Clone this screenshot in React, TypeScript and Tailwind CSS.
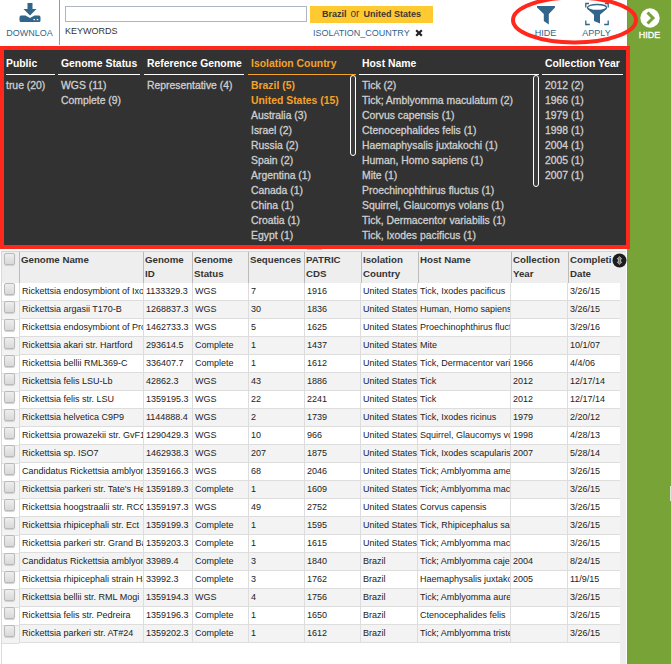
import React from "react";

type Facet = { title: string; items: string[]; box: string; active?: boolean; thumb?: string };

const facets: Facet[] = [
  { title: "Public", items: ["true (20)"], box: "w-[49px] mr-[3px]" },
  { title: "Genome Status", items: ["WGS (11)", "Complete (9)"], box: "w-[82px] mr-[4px]" },
  { title: "Reference Genome", items: ["Representative (4)"], box: "w-[100px] mr-[4px]" },
  {
    title: "Isolation Country",
    items: ["Brazil (5)", "United States (15)", "Australia (3)", "Israel (2)", "Russia (2)", "Spain (2)", "Argentina (1)", "Canada (1)", "China (1)", "Croatia (1)", "Egypt (1)"],
    box: "w-[108px] mr-[3px]",
    active: true,
    thumb: "h-[81px]",
  },
  {
    title: "Host Name",
    items: ["Tick (2)", "Tick; Amblyomma maculatum (2)", "Corvus capensis (1)", "Ctenocephalides felis (1)", "Haemaphysalis juxtakochi (1)", "Human, Homo sapiens (1)", "Mite (1)", "Proechinophthirus fluctus (1)", "Squirrel, Glaucomys volans (1)", "Tick, Dermacentor variabilis (1)", "Tick, Ixodes pacificus (1)"],
    box: "w-[180px] mr-[3px]",
    thumb: "h-[112px]",
  },
  { title: "Collection Year", items: ["2012 (2)", "1966 (1)", "1979 (1)", "1998 (1)", "2004 (1)", "2005 (1)", "2007 (1)"], box: "w-[81px]" },
];

const rows: string[][] = [
  ["Rickettsia endosymbiont of Ixo", "1133329.3", "WGS", "7", "1916", "United States", "Tick, Ixodes pacificus", "", "3/26/15"],
  ["Rickettsia argasii T170-B", "1268837.3", "WGS", "30", "1836", "United States", "Human, Homo sapiens", "", "3/26/15"],
  ["Rickettsia endosymbiont of Pro", "1462733.3", "WGS", "5", "1625", "United States", "Proechinophthirus fluct", "", "3/29/16"],
  ["Rickettsia akari str. Hartford", "293614.5", "Complete", "1", "1437", "United States", "Mite", "", "10/1/07"],
  ["Rickettsia bellii RML369-C", "336407.7", "Complete", "1", "1612", "United States", "Tick, Dermacentor vari", "1966", "4/4/06"],
  ["Rickettsia felis LSU-Lb", "42862.3", "WGS", "43", "1886", "United States", "Tick", "2012", "12/17/14"],
  ["Rickettsia felis str. LSU", "1359195.3", "WGS", "22", "2241", "United States", "Tick", "2012", "12/17/14"],
  ["Rickettsia helvetica C9P9", "1144888.4", "WGS", "2", "1739", "United States", "Tick, Ixodes ricinus", "1979", "2/20/12"],
  ["Rickettsia prowazekii str. GvF1", "1290429.3", "WGS", "10", "966", "United States", "Squirrel, Glaucomys vo", "1998", "4/28/13"],
  ["Rickettsia sp. ISO7", "1462938.3", "WGS", "207", "1875", "United States", "Tick, Ixodes scapularis", "2007", "5/28/14"],
  ["Candidatus Rickettsia amblyom", "1359166.3", "WGS", "68", "2046", "United States", "Tick; Amblyomma ame", "", "3/26/15"],
  ["Rickettsia parkeri str. Tate's He", "1359189.3", "Complete", "1", "1609", "United States", "Tick; Amblyomma mac", "", "3/26/15"],
  ["Rickettsia hoogstraalii str. RCC", "1359197.3", "WGS", "49", "2752", "United States", "Corvus capensis", "", "3/26/15"],
  ["Rickettsia rhipicephali str. Ect", "1359199.3", "Complete", "1", "1595", "United States", "Tick, Rhipicephalus sa", "", "3/26/15"],
  ["Rickettsia parkeri str. Grand Ba", "1359203.3", "Complete", "1", "1615", "United States", "Tick; Amblyomma mac", "", "3/26/15"],
  ["Candidatus Rickettsia amblyom", "33989.4", "Complete", "3", "1840", "Brazil", "Tick; Amblyomma caje", "2004", "8/24/15"],
  ["Rickettsia rhipicephali strain HJ", "33992.3", "Complete", "3", "1762", "Brazil", "Haemaphysalis juxtako", "2005", "11/9/15"],
  ["Rickettsia bellii str. RML Mogi", "1359194.3", "WGS", "4", "1756", "Brazil", "Tick; Amblyomma aure", "", "3/26/15"],
  ["Rickettsia felis str. Pedreira", "1359196.3", "Complete", "1", "1650", "Brazil", "Ctenocephalides felis", "", "3/26/15"],
  ["Rickettsia parkeri str. AT#24", "1359202.3", "Complete", "1", "1612", "Brazil", "Tick; Amblyomma triste", "", "3/26/15"],
];

const heads = ["Genome Name", "Genome ID", "Genome Status", "Sequences", "PATRIC CDS", "Isolation Country", "Host Name", "Collection Year", "Completi Date"];
const headGrid = "grid grid-cols-[124px_49px_56px_56px_57px_57px_93px_57px_57px]";
const rowGrid = "grid grid-cols-[124px_49px_56px_56px_56px_57px_93px_57px_53px]";

function Checkbox() {
  return <span className="block h-[12px] w-[11px] rounded-[2px] border border-[#b9b9b9] bg-gradient-to-b from-[#eeeeee] to-[#d9d9d9] shadow-[0_1px_1px_#d0d0d0]" />;
}

function Toolbar() {
  return (
    <header className="flex h-[46px] w-full text-[9px] leading-[12px]">
      <div className="flex h-[45px] w-[60px] shrink-0 flex-col items-center overflow-hidden border-r border-[#999] pt-[3px] text-[#32658a]">
        <svg width="22" height="20" viewBox="0 0 22 20" fill="#32658a">
          <path d="M8.500 0h5v6h4L11 12.500 4.500 6h4z" />
          <path fillRule="evenodd" d="M2 12.500h4.500l4.500 2.500 4.500-2.500H20q1.500 0 1.500 2V17.500q0 1.500-1.500 1.500H2Q.5 19 .5 17.500v-3q0-2 1.500-2zM14.500 16v1.300H16V16zM17.700 16v1.300h1.500V16z" />
        </svg>
        <span className="mt-[4px]">DOWNLOA</span>
      </div>
      <div className="ml-[5px] w-[242px] shrink-0 pt-[6px] text-[#333]">
        <div className="h-[16px] border border-[#b1b5c3] bg-white" />
        <div className="mt-[3px]">KEYWORDS</div>
      </div>
      <div className="ml-[3px] w-[123px] shrink-0 pt-[6px]">
        <div className="flex h-[17px] items-center justify-center whitespace-pre bg-[#ffc931] pb-px font-bold text-[#3b3833]">
          Brazil<span className="mx-[4px] text-[10px] font-normal">or</span>United States
        </div>
        <div className="mt-[4px] flex items-center pl-[3px] text-[#32658a]">
          ISOLATION_COUNTRY
          <svg className="ml-[5px]" width="8" height="8" viewBox="0 0 8 8"><path d="M1.200 1.200l5.600 5.600M6.800 1.200L1.200 6.800" stroke="#222" strokeWidth="2.200" /></svg>
        </div>
      </div>
      <div className="ml-[102px] flex w-[21px] shrink-0 flex-col items-center pt-[6px] text-[#32658a]">
        <svg width="18" height="19" viewBox="0 0 18 19"><path d="M0 0h18v1.500L11.800 8v10.500L6.800 15V8L0 1.500z" fill="#32658a" /></svg>
        <span className="mt-[2px]">HIDE</span>
      </div>
      <div className="ml-[26px] flex w-[29px] shrink-0 flex-col items-center pt-[2px] text-[#32658a]">
        <svg width="24" height="24" viewBox="0 0 24 24" fill="none" stroke="#32658a">
          <path d="M.8 5.500V1.500H4M20 1.500h3.200v4M.8 18.500v4h4M19.200 22.500h4v-4" strokeWidth="1.300" />
          <path d="M2 5.500c0 2.500 5.500 5 7 7.500v6l6 2.500V13c1.500-2.500 7-5 7-7.500z" fill="#32658a" stroke="none" />
          <ellipse cx="12" cy="5.500" rx="9.500" ry="3" strokeWidth="1.300" fill="#fff" />
        </svg>
        <span className="mt-[1px]">APPLY</span>
      </div>
    </header>
  );
}

function FacetPanel() {
  return (
    <section className="relative z-10 flex h-[203px] w-[630px] border-4 border-[#ff281c] bg-[#323232] pl-[2px] text-[10.4px]">
      {facets.map((f) => (
        <div key={f.title} className={`shrink-0 ${f.box}`}>
          <h2 className={`h-[25px] whitespace-nowrap border-b pt-[6px] font-bold leading-[16px] ${f.active ? "border-[#f5a227] text-[#f5a227]" : "border-white text-white"} ${f.title === "Public" ? "" : "pl-[3px]"}`}>
            {f.title}
          </h2>
          <div className="flex justify-between">
            <ul className={`whitespace-nowrap pt-[3px] leading-[15px] text-[#cfcfcf] ${f.title === "Public" ? "" : "pl-[3px]"}`}>
              {f.items.map((item, i) => (
                <li key={item} className={f.active && i < 2 ? "font-bold text-[#f5a227]" : "[-webkit-text-stroke:0.3px_#cfcfcf]"}>{item}</li>
              ))}
            </ul>
            {f.thumb && <div className={`w-[6px] shrink-0 rounded-[3px] border border-white bg-[#3b3b3b] ${f.thumb}`} />}
          </div>
        </div>
      ))}
    </section>
  );
}

function GenomeGrid() {
  return (
    <section className="flex h-[415px] w-[627px] pl-px pt-[2px]">
      <div className="w-[18px] shrink-0 border-l border-[#d9d9d9]">
        <div className="flex h-[32px] border-t border-[#d5d5d5] bg-[#eee] pl-[2px] pt-px"><Checkbox /></div>
        {rows.map((r, i) => (
          <div key={r[1]} className={`flex border-b border-[#ddd] pl-[2px] ${i === 0 ? "h-[19px]" : "h-[18px]"} ${i % 2 ? "bg-[#f3f3f3]" : "bg-white"}`}>
            <div className={i === 0 ? "" : "-mt-px"}><Checkbox /></div>
          </div>
        ))}
      </div>
      <div className="flex w-[607px] shrink-0 flex-col">
        <div className={`h-[32px] shrink-0 border-t border-[#d5d5d5] bg-[#eee] text-[9.7px] font-bold leading-[14px] text-[#333] ${headGrid}`}>
          {heads.map((h, i) => (
            <div key={h} className="border-l border-[#bbb] pl-px pt-px">
              <div className={i === 0 || i === 3 || i === 6 ? "whitespace-nowrap" : ""}>{i === 8 ? <>Completi<br />Date</> : h}</div>
            </div>
          ))}
        </div>
        <div className="flex flex-1">
          <div className="w-[601px] shrink-0">
            {rows.map((r, i) => (
              <div key={r[1]} className={`h-[18px] border-b border-[#ddd] text-[9px] leading-[17px] text-[#222] ${rowGrid} ${i % 2 ? "bg-[#f3f3f3]" : "bg-white"}`}>
                {r.map((c, j) => (
                  <div key={j} className="overflow-hidden whitespace-nowrap border-l border-[#ddd] pl-[2px]">{c}</div>
                ))}
              </div>
            ))}
          </div>
          <div className="w-[6px] bg-[#eee]" />
        </div>
      </div>
    </section>
  );
}

export default function App() {
  return (
    <div className="relative flex h-[664px] w-[671px] overflow-hidden bg-white font-['Liberation_Sans',Arial,sans-serif]">
      <main className="w-[628px] shrink-0 border-r border-[#858585]">
        <Toolbar />
        <FacetPanel />
        <GenomeGrid />
      </main>
      <aside className="flex w-[43px] flex-col items-center bg-[#78a437] pt-[8px] text-[9px] leading-[12px] text-white">
        <svg width="20" height="20" viewBox="0 0 20 20"><circle cx="10" cy="10" r="9.700" fill="#fff" /><path d="M7.500 4.500l5.500 5.500-5.500 5.500" fill="none" stroke="#78a437" strokeWidth="3" /></svg>
        <span className="mt-[1px] [-webkit-text-stroke:0.3px_#fff]">HIDE</span>
        <div className="mt-[445px] h-[15px] w-px self-end bg-[#dfe6d4]" />
      </aside>
      <svg className="absolute left-[612px] top-[253px]" width="15" height="15" viewBox="0 0 15 15"><circle cx="7.500" cy="7.500" r="7" fill="#1d1d1d" /><path d="M7.500 3.500L9.800 6H8.500v3h1.300l-2.300 2.500L5.200 9h1.300V6H5.200z" fill="#777" stroke="#ddd" strokeWidth=".6" /></svg>
      <div className="absolute left-[307px] top-[249px] h-px w-[15px] bg-[#c3c5d4]" />
      <svg className="absolute left-[508px] top-0 z-20" width="134" height="46" viewBox="0 0 134 46"><ellipse cx="66.500" cy="20" rx="61.500" ry="22.500" fill="none" stroke="#ff281c" strokeWidth="4" /></svg>
    </div>
  );
}
